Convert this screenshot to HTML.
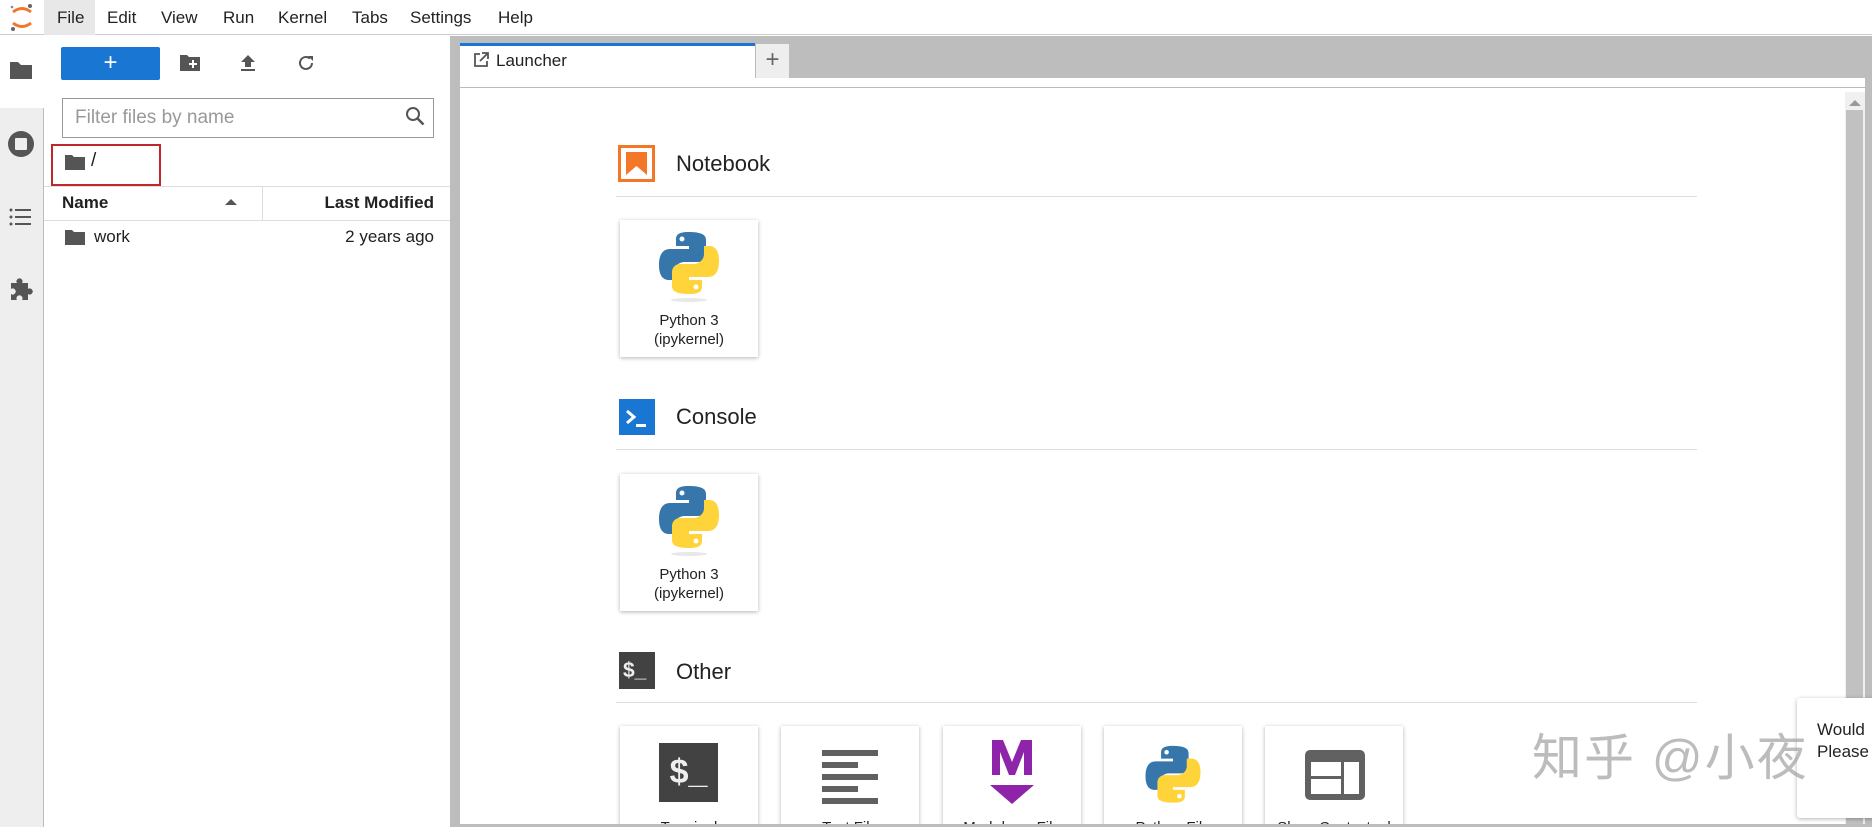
<!DOCTYPE html>
<html><head><meta charset="utf-8"><style>
*{box-sizing:border-box;margin:0;padding:0}
body{width:1872px;height:827px;overflow:hidden;background:#fff;font-family:"Liberation Sans","Noto Sans CJK SC",sans-serif;color:#212121;position:relative}
.a{position:absolute}
.menu span{position:absolute;top:8px;font-size:17px;color:#222}
.card{position:absolute;width:138px;height:137px;background:#fff;box-shadow:0 1px 4px rgba(0,0,0,.3);text-align:center;font-size:15px;line-height:19px;color:#222}
.rule{position:absolute;left:616px;width:1081px;height:1px;background:#ddd}
.ttl{position:absolute;left:676px;font-size:22px;color:#222}
</style></head><body>
<div class="a" style="left:0;top:0;width:1872px;height:35px;background:#fff;border-bottom:1px solid #ccc"></div>
<svg class="a" style="left:8px;top:2px" width="28" height="30" viewBox="0 0 28 30"><path d="M5 10 Q14 3 23 10" stroke="#f37726" stroke-width="3" fill="none"/><path d="M5 21 Q14 28 23 21" stroke="#f37726" stroke-width="3" fill="none"/><circle cx="22" cy="4" r="2" fill="#666"/><circle cx="5" cy="27" r="2" fill="#666"/><circle cx="4" cy="5" r="1.3" fill="#888"/></svg>
<div class="a" style="left:44px;top:0;width:51px;height:35px;background:#e8e8e8"></div>
<div class="menu"><span style="left:57px">File</span><span style="left:107px">Edit</span><span style="left:161px">View</span><span style="left:223px">Run</span><span style="left:278px">Kernel</span><span style="left:352px">Tabs</span><span style="left:410px">Settings</span><span style="left:498px">Help</span></div>
<div class="a" style="left:0;top:36px;width:44px;height:791px;background:#eee;border-right:1px solid #bbb"></div>
<div class="a" style="left:0;top:36px;width:44px;height:72px;background:#fff"></div>
<svg class="a" style="left:9px;top:60px" width="24" height="20"><path d="M1 2h8l3 3h11v14H1z" fill="#555"/></svg>
<svg class="a" style="left:7px;top:130px" width="28" height="28"><circle cx="14" cy="14" r="13" fill="#555"/><rect x="8" y="8" width="12" height="12" rx="1" fill="#eee"/></svg>
<svg class="a" style="left:9px;top:207px" width="24" height="20"><g fill="#555"><circle cx="2" cy="3" r="1.5"/><circle cx="2" cy="10" r="1.5"/><circle cx="2" cy="17" r="1.5"/><rect x="6" y="2" width="16" height="2"/><rect x="6" y="9" width="16" height="2"/><rect x="6" y="16" width="16" height="2"/></g></svg>
<svg class="a" style="left:8px;top:276px" width="26" height="26"><path d="M3 7h6a3 3 0 1 1 5 0h6v6a3 3 0 1 1 0 5v6h-6a3 3 0 1 0-5 0H3v-6a3 3 0 1 0 0-5z" fill="#555"/></svg>
<div class="a" style="left:61px;top:47px;width:99px;height:33px;background:#1976d2;border-radius:2px;color:#fff;font-size:24px;text-align:center;line-height:31px">+</div>
<svg class="a" style="left:180px;top:54px" width="20" height="17"><path d="M0 1h7l2 2h11v14H0z" fill="#555"/><path d="M13 6v8M9 10h8" stroke="#fff" stroke-width="2"/></svg>
<svg class="a" style="left:239px;top:54px" width="18" height="18"><path d="M9 1l7 7h-4v5H6V8H2z" fill="#555"/><rect x="2" y="15" width="14" height="2" fill="#555"/></svg>
<svg class="a" style="left:297px;top:54px" width="18" height="18"><path d="M15 9a6 6 0 1 1-2-4.5" stroke="#555" stroke-width="2" fill="none"/><path d="M11 2h5v5z" fill="#555"/></svg>
<div class="a" style="left:62px;top:98px;width:372px;height:40px;border:1px solid #999;background:#fff"></div>
<div class="a" style="left:75px;top:107px;font-size:19px;color:#999">Filter files by name</div>
<svg class="a" style="left:405px;top:106px" width="20" height="20"><circle cx="8" cy="8" r="6" stroke="#555" stroke-width="2" fill="none"/><path d="M12.5 12.5l6 6" stroke="#555" stroke-width="2.5"/></svg>
<div class="a" style="left:51px;top:144px;width:110px;height:42px;border:2px solid #c0262d"></div>
<svg class="a" style="left:65px;top:154px" width="20" height="16"><path d="M0 1h7l2 2h11v13H0z" fill="#555"/></svg>
<div class="a" style="left:91px;top:150px;font-size:19px">/</div>
<div class="a" style="left:44px;top:186px;width:406px;height:1px;background:#ddd"></div>
<div class="a" style="left:44px;top:220px;width:406px;height:1px;background:#ddd"></div>
<div class="a" style="left:262px;top:186px;width:1px;height:34px;background:#ddd"></div>
<div class="a" style="left:62px;top:193px;font-size:17px;font-weight:bold">Name</div>
<svg class="a" style="left:225px;top:198px" width="12" height="8"><path d="M0 7L6 1l6 6z" fill="#555"/></svg>
<div class="a" style="left:262px;top:193px;width:172px;text-align:right;font-size:17px;font-weight:bold">Last Modified</div>
<svg class="a" style="left:65px;top:229px" width="20" height="16"><path d="M0 1h7l2 2h11v13H0z" fill="#555"/></svg>
<div class="a" style="left:94px;top:227px;font-size:17px">work</div>
<div class="a" style="left:262px;top:227px;width:172px;text-align:right;font-size:17px">2 years ago</div>
<div class="a" style="left:450px;top:36px;width:10px;height:791px;background:#bdbdbd"></div>
<div class="a" style="left:460px;top:36px;width:1412px;height:42px;background:#bdbdbd"></div>
<div class="a" style="left:1865px;top:36px;width:7px;height:791px;background:#bdbdbd"></div>
<div class="a" style="left:460px;top:43px;width:295px;height:45px;background:#fff;border-top:3px solid #1976d2"></div>
<svg class="a" style="left:473px;top:52px" width="16" height="16"><path d="M7 2H2v12h12V9" stroke="#555" stroke-width="1.8" fill="none"/><path d="M9 1h6v6M15 1L7 9" stroke="#555" stroke-width="1.8" fill="none"/></svg>
<div class="a" style="left:496px;top:51px;font-size:17px">Launcher</div>
<div class="a" style="left:755px;top:44px;width:34px;height:34px;background:#eee;border-left:1px solid #bbb;font-size:24px;color:#666;text-align:center;line-height:32px">+</div>
<div class="a" style="left:460px;top:87px;width:1405px;height:1px;background:#bbb"></div>
<div class="a" style="left:1845px;top:92px;width:20px;height:732px;background:#f0f0f0"></div>
<svg class="a" style="left:1849px;top:99px" width="12" height="8"><path d="M0 7L6 1l6 6z" fill="#999"/></svg>
<div class="a" style="left:1846px;top:110px;width:17px;height:714px;background:#c1c1c1"></div>
<svg class="a" style="left:618px;top:145px" width="37" height="37"><rect x="1.5" y="1.5" width="34" height="34" fill="none" stroke="#f37726" stroke-width="3"/><path d="M8 7h21v23l-10.5-9L8 30z" fill="#f37726"/></svg>
<div class="ttl" style="top:151px">Notebook</div>
<div class="rule" style="top:196px"></div>
<div class="card" style="left:620px;top:220px"><svg style="margin-top:10px" width="64" height="72" viewBox="0 0 64 72"><path d="M31 2c-12 0-12 5-12 8v6h13v3H13c-6 0-11 4-11 16s5 15 10 15h5v-8c0-6 5-10 11-10h13c5 0 8-4 8-8V10c0-5-4-8-18-8z" fill="#3776ab"/><circle cx="25" cy="9" r="2.5" fill="#fff"/><path d="M33 64c12 0 12-5 12-8v-6H32v-3h19c6 0 11-4 11-16S57 16 52 16h-5v8c0 6-5 10-11 10H23c-5 0-8 4-8 8v14c0 5 4 8 18 8z" fill="#ffd43b"/><circle cx="39" cy="57" r="2.5" fill="#fff"/><ellipse cx="32" cy="70" rx="18" ry="2" fill="#e8e8e8"/></svg><div style="margin-top:4px">Python 3<br>(ipykernel)</div></div>
<svg class="a" style="left:619px;top:399px" width="36" height="36"><rect width="36" height="36" fill="#1976d2"/><path d="M8 12l7 6-7 6" stroke="#fff" stroke-width="3" fill="none"/><rect x="17" y="25" width="10" height="3" fill="#fff"/></svg>
<div class="ttl" style="top:404px">Console</div>
<div class="rule" style="top:449px"></div>
<div class="card" style="left:620px;top:474px"><svg style="margin-top:10px" width="64" height="72" viewBox="0 0 64 72"><path d="M31 2c-12 0-12 5-12 8v6h13v3H13c-6 0-11 4-11 16s5 15 10 15h5v-8c0-6 5-10 11-10h13c5 0 8-4 8-8V10c0-5-4-8-18-8z" fill="#3776ab"/><circle cx="25" cy="9" r="2.5" fill="#fff"/><path d="M33 64c12 0 12-5 12-8v-6H32v-3h19c6 0 11-4 11-16S57 16 52 16h-5v8c0 6-5 10-11 10H23c-5 0-8 4-8 8v14c0 5 4 8 18 8z" fill="#ffd43b"/><circle cx="39" cy="57" r="2.5" fill="#fff"/><ellipse cx="32" cy="70" rx="18" ry="2" fill="#e8e8e8"/></svg><div style="margin-top:4px">Python 3<br>(ipykernel)</div></div>
<div class="a" style="left:619px;top:652px;width:36px;height:37px;background:#424242;color:#eee;font-size:21px;font-weight:bold;line-height:37px;padding-left:4px">$_</div>
<div class="ttl" style="top:659px">Other</div>
<div class="rule" style="top:702px"></div>
<div class="a" style="left:0;top:0;width:1872px;height:824px;overflow:hidden">
<div class="card" style="left:620px;top:726px"><div class="a" style="left:39px;top:17px;width:59px;height:59px;background:#424242;color:#eee;font-size:34px;line-height:59px;font-weight:bold">$_</div><div class="a" style="left:0;top:92px;width:138px">Terminal</div></div>
<div class="card" style="left:781px;top:726px"><svg class="a" style="left:41px;top:24px" width="56" height="55"><g fill="#616161"><rect y="0" width="56" height="6"/><rect y="12" width="36" height="6"/><rect y="24" width="56" height="6"/><rect y="36" width="36" height="6"/><rect y="48" width="56" height="6"/></g></svg><div class="a" style="left:0;top:92px;width:138px">Text File</div></div>
<div class="card" style="left:943px;top:726px"><svg class="a" style="left:47px;top:14px" width="44" height="64"><path d="M2 0h11l9 22 9-22h11v35h-8V12l-9 23h-6L10 12v23H2z" fill="#8e24aa"/><path d="M0 45h44L22 64z" fill="#8e24aa"/></svg><div class="a" style="left:0;top:92px;width:138px">Markdown File</div></div>
<div class="card" style="left:1104px;top:726px"><svg class="a" style="left:39px;top:18px" width="60" height="66" viewBox="0 0 64 72"><path d="M31 2c-12 0-12 5-12 8v6h13v3H13c-6 0-11 4-11 16s5 15 10 15h5v-8c0-6 5-10 11-10h13c5 0 8-4 8-8V10c0-5-4-8-18-8z" fill="#3776ab"/><circle cx="25" cy="9" r="2.5" fill="#fff"/><path d="M33 64c12 0 12-5 12-8v-6H32v-3h19c6 0 11-4 11-16S57 16 52 16h-5v8c0 6-5 10-11 10H23c-5 0-8 4-8 8v14c0 5 4 8 18 8z" fill="#ffd43b"/><circle cx="39" cy="57" r="2.5" fill="#fff"/></svg><div class="a" style="left:0;top:92px;width:138px">Python File</div></div>
<div class="card" style="left:1265px;top:726px"><svg class="a" style="left:40px;top:24px" width="60" height="50"><rect width="60" height="50" rx="5" fill="#616161"/><rect x="6" y="12" width="30" height="14" fill="#fff"/><rect x="6" y="29" width="30" height="15" fill="#fff"/><rect x="39" y="12" width="15" height="32" fill="#fff"/></svg><div class="a" style="left:0;top:92px;width:138px">Show Contextual Help</div></div>
</div>
<div class="a" style="left:460px;top:824px;width:1412px;height:3px;background:#bdbdbd"></div>
<div class="a" style="left:1797px;top:698px;width:80px;height:120px;background:#fff;box-shadow:0 1px 4px rgba(0,0,0,.3);border-radius:3px"></div>
<div class="a" style="left:1817px;top:719px;font-size:17px;line-height:22px;color:#222">Would<br>Please</div>
<div class="a" style="left:1532px;top:718px;font-size:50px;color:rgba(160,160,160,.7);letter-spacing:2px">知乎 @小夜</div>
</body></html>
